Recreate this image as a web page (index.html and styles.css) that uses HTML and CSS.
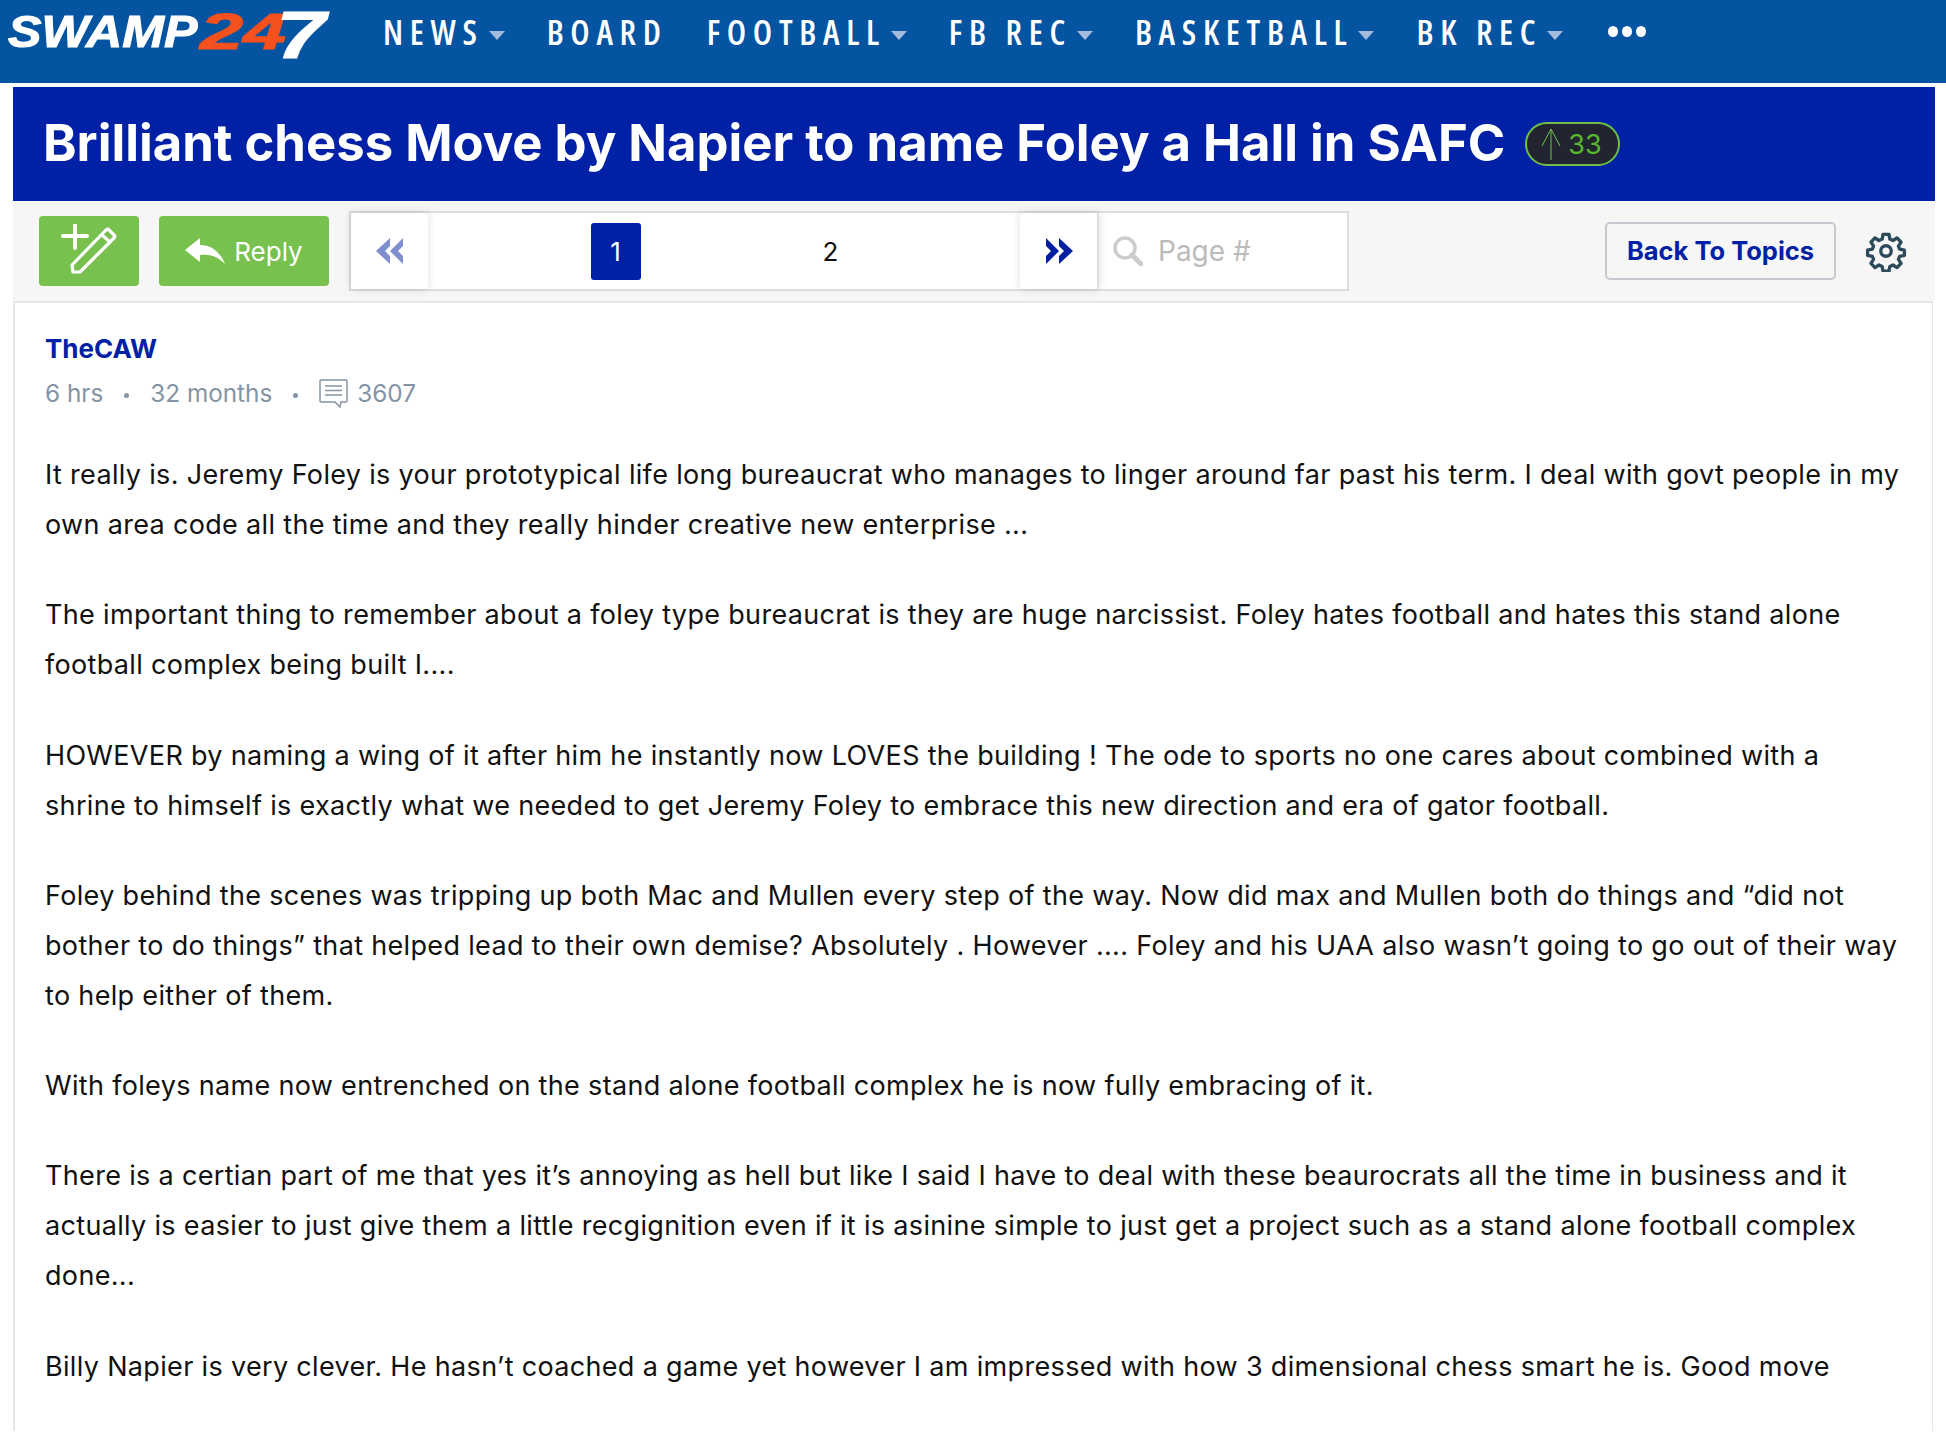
FILE: index.html
```html
<!DOCTYPE html>
<html lang="en">
<head>
    <meta charset="UTF-8">
    <meta name="viewport" content="width=device-width, initial-scale=1.0">
    <title>Brilliant chess Move by Napier to name Foley a Hall in SAFC</title>
    <link rel="stylesheet" href="styles.css">
</head>
<body>

    <!-- Top nav -->
    <header class="topnav">
        <a class="logo" href="#"><span class="logo-name">SWAMP</span><span class="logo-num">24</span><span class="logo-seven">7</span></a>
        <nav class="menu">
            <a class="menu-item caret" href="#">NEWS</a>
            <a class="menu-item" href="#">BOARD</a>
            <a class="menu-item caret" href="#">FOOTBALL</a>
            <a class="menu-item caret" href="#">FB REC</a>
            <a class="menu-item caret" href="#">BASKETBALL</a>
            <a class="menu-item caret" href="#">BK REC</a>
            <a class="menu-dots" href="#"><i></i><i></i><i></i></a>
        </nav>
    </header>

    <main class="wrap">
        <div class="title-bar">
            <h1>Brilliant chess Move by Napier to name Foley a Hall in SAFC</h1>
            <span class="votes">
                <svg width="20" height="34" viewBox="0 0 20 34"><path d="M10 33V2M1 19 10 2l9 17" fill="none" stroke="#6cc04a" stroke-width="1"/></svg>
                33
            </span>
        </div>

        <div class="toolbar">
            <a class="btn btn-new" href="#">
                <svg width="56" height="54" viewBox="0 0 56 54"><path d="M2 12h24M14 0v24" stroke="#fff" stroke-width="4" stroke-linecap="round" fill="none"/><path d="M11 41 45 6c1-1 2-1 3 0l5 5c1 1 1 2 0 3L19 48H12zM41 11l8 7" stroke="#fff" stroke-width="3.200" fill="none" stroke-linejoin="round"/></svg>
            </a>
            <a class="btn btn-reply" href="#">
                <svg width="40" height="26" viewBox="0 0 40 26"><path d="M0 12 15 0v7c13 0 21 9 25 19-7-7-14-10-25-9v7z" fill="#fff"/></svg>
                Reply
            </a>
            <div class="pager">
                <a class="page-arrow" href="#">
                    <svg class="faded" width="28" height="28" viewBox="0 0 28 28"><path d="M14 1 0 14l14 13v-8L9 14l5-5zM27 1 14 14l13 13v-8l-5-5 5-5z" fill="#00209f"/></svg>
                </a>
                <div class="page-nums">
                    <a class="page-num current" href="#">1</a>
                    <a class="page-num" href="#">2</a>
                </div>
                <a class="page-arrow next" href="#">
                    <svg width="28" height="28" viewBox="0 0 28 28"><path d="M1 1l13 13L1 27v-8l5-5-5-5zM14 1l14 13-14 13v-8l5-5-5-5z" fill="#00209f"/></svg>
                </a>
                <div class="page-search">
                    <svg width="30" height="30" viewBox="0 0 30 30"><circle cx="12" cy="12" r="10" fill="none" stroke="#ccc" stroke-width="3.500"/><path d="M19 19l9 9" stroke="#ccc" stroke-width="5" stroke-linecap="round"/></svg>
                    <span>Page #</span>
                </div>
            </div>
            <a class="back-link" href="#">Back To Topics</a>
            <a class="gear" href="#">
                <svg width="42" height="42" viewBox="0 0 24 24" fill="none" stroke="#2c4a5a" stroke-width="1.900" stroke-linejoin="round"><circle cx="12" cy="12" r="3"/><path d="M10.300 2.500h3.400l.5 2.700 1.800.8 2.300-1.500 2.300 2.400-1.500 2.300.7 1.700 2.700.6v3l-2.700.6-.7 1.700 1.500 2.300-2.300 2.400-2.300-1.500-1.800.8-.5 2.700h-3.400l-.5-2.700-1.800-.8-2.300 1.500-2.300-2.400 1.500-2.300-.7-1.700-2.700-.6v-3l2.700-.6.7-1.700-1.500-2.300 2.300-2.400 2.300 1.500 1.800-.8z"/></svg>
            </a>
        </div>

        <article class="post">
            <a class="post-author" href="#">TheCAW</a>
            <div class="post-meta">
                <span>6 hrs</span>
                <i class="dot"></i>
                <span>32 months</span>
                <i class="dot"></i>
                <svg width="29" height="29" viewBox="0 0 29 29" fill="none" stroke="#8494a4" stroke-width="1.500"><path d="M2 1h25a1 1 0 0 1 1 1v20a1 1 0 0 1-1 1h-5l-1 5-5-5H2a1 1 0 0 1-1-1V2a1 1 0 0 1 1-1z"/><path d="M6 7h17M6 11.500h17M6 16h17"/></svg>
                <span>3607</span>
            </div>
            <div class="post-body">
                <p>It really is. Jeremy Foley is your prototypical life long bureaucrat who manages to linger around far past his term. I deal with govt people in my own area code all the time and they really hinder creative new enterprise ...</p>
                <p>The important thing to remember about a foley type bureaucrat is they are huge narcissist. Foley hates football and hates this stand alone football complex being built I....</p>
                <p>HOWEVER by naming a wing of it after him he instantly now LOVES the building ! The ode to sports no one cares about combined with a shrine to himself is exactly what we needed to get Jeremy Foley to embrace this new direction and era of gator football.</p>
                <p>Foley behind the scenes was tripping up both Mac and Mullen every step of the way. Now did max and Mullen both do things and “did not bother to do things” that helped lead to their own demise? Absolutely . However .... Foley and his UAA also wasn’t going to go out of their way to help either of them.</p>
                <p>With foleys name now entrenched on the stand alone football complex he is now fully embracing of it.</p>
                <p>There is a certian part of me that yes it’s annoying as hell but like I said I have to deal with these beaurocrats all the time in business and it actually is easier to just give them a little recgignition even if it is asinine simple to just get a project such as a stand alone football complex done...</p>
                <p>Billy Napier is very clever. He hasn’t coached a game yet however I am impressed with how 3 dimensional chess smart he is. Good move</p>
            </div>
        </article>
    </main>

</body>
</html>
```

FILE: styles.css
```css
html, body {
    margin: 0;
    height: 1432px;
    overflow: hidden;
}
body {
    font-family: Inter, "Noto Sans", Arial, sans-serif;
    background: #fff;
    color: #111;
}
a {
    text-decoration: none;
    color: inherit;
}

/* top nav */
.topnav {
    display: flex;
    align-items: flex-start;
    height: 83px;
    background: #0454a2;
    margin-bottom: 4px;
}
.logo {
    display: flex;
    width: 383px;
    height: 70px;
    padding: 8px 0 0 8px;
    box-sizing: border-box;
    font-family: "Liberation Sans", Arial, sans-serif;
    font-weight: bold;
    font-style: italic;
    font-size: 44px;
    line-height: 48px;
    color: #fff;
    white-space: nowrap;
    -webkit-text-stroke: 1px currentColor;
    filter: blur(.5px);
}
.logo span {
    display: block;
    transform-origin: 0 0;
}
.logo-name {
    width: 192px;
    transform: scaleX(1.14);
}
.logo-num {
    width: 76px;
    color: #f4511e;
    font-size: 50px;
    transform: scaleX(1.55);
}
.logo-seven {
    font-size: 66px;
    line-height: 54px;
    transform: scaleX(1.35);
}
.menu {
    display: flex;
    align-items: center;
    gap: 39px;
    height: 63px;
    font-family: "Open Sans", "Liberation Sans", Arial, sans-serif;
    font-stretch: condensed;
}
.menu-item {
    color: #fff;
    font-size: 34px;
    font-weight: 600;
    letter-spacing: 6.700px;
    white-space: nowrap;
}
.caret::after {
    content: "";
    display: inline-block;
    margin: 0 3px 0 5px;
    vertical-align: middle;
    border: 8px solid transparent;
    border-top: 9px solid #a4bbdb;
    border-bottom: 0;
}
.menu-dots {
    display: flex;
    gap: 4px;
    margin-left: 3px;
}
.menu-dots i {
    width: 10px;
    height: 11px;
    border-radius: 50%;
    background: #fff;
}

/* title */
.wrap {
    margin-left: 13px;
    width: 1922px;
}
.title-bar {
    display: flex;
    align-items: center;
    height: 114px;
    padding-left: 30px;
    background: #0020a5;
    color: #fff;
}
.title-bar h1 {
    margin: 0 0 4px;
    font-size: 50.800px;
    font-weight: 700;
    white-space: nowrap;
}
.votes {
    display: flex;
    align-items: center;
    gap: 7px;
    height: 44px;
    box-sizing: border-box;
    margin-left: 20px;
    padding: 0 16px 0 14px;
    border: 2px solid #6cc04a;
    border-radius: 22px;
    background: #22242f;
    color: #58b92e;
    font-size: 27px;
}

/* toolbar */
.toolbar {
    display: flex;
    align-items: center;
    height: 100px;
    padding: 0 28px 0 26px;
    background: #f6f6f6;
}
.btn {
    display: flex;
    align-items: center;
    justify-content: center;
    height: 70px;
    border-radius: 4px;
    background: #78c14f;
    color: #fff;
    font-size: 26px;
}
.btn-new {
    width: 100px;
}
.btn-reply {
    width: 170px;
    gap: 9px;
    margin-left: 20px;
}
.pager {
    display: flex;
    width: 1000px;
    height: 80px;
    box-sizing: border-box;
    margin-left: 20px;
    border: 2px solid #ddd;
    background: #fff;
}
.page-arrow {
    display: flex;
    align-items: center;
    justify-content: center;
    width: 77px;
    flex: none;
    border-radius: 3px;
    box-shadow: 0 0 8px rgba(0, 0, 0, .15);
}
.page-arrow .faded {
    opacity: .5;
}
.page-arrow.next {
    border-right: 2px solid #ddd;
}
.page-nums {
    display: flex;
    flex: 1;
    justify-content: center;
    align-items: center;
    gap: 165px;
    padding-right: 2px;
}
.page-num {
    display: flex;
    align-items: center;
    justify-content: center;
    width: 50px;
    height: 57px;
    border-radius: 3px;
    font-size: 26px;
}
.page-num.current {
    background: #0020a5;
    color: #fff;
}
.page-search {
    display: flex;
    align-items: center;
    gap: 15px;
    width: 248px;
    flex: none;
    padding-left: 14px;
    box-sizing: border-box;
    color: #bbb;
    font-size: 28px;
}
.back-link {
    display: flex;
    align-items: center;
    justify-content: center;
    width: 231px;
    height: 58px;
    box-sizing: border-box;
    margin-left: auto;
    padding-bottom: 2px;
    border: 2px solid #c8c8d0;
    border-radius: 5px;
    color: #0020a5;
    font-size: 25.500px;
    font-weight: 700;
}
.gear {
    display: flex;
    margin-left: 29px;
}

/* post */
.post {
    width: 1920px;
    min-height: 1130px;
    box-sizing: border-box;
    padding: 28px 30px 0;
    background: #fff;
    border: 2px solid #e6e6e6;
    border-bottom: 0;
    border-right-width: 1px;
}
.post-author {
    display: block;
    color: #0020a5;
    font-size: 26px;
    font-weight: 700;
    line-height: 36px;
}
.post-meta {
    display: flex;
    align-items: center;
    gap: 9px;
    margin-top: 4px;
    height: 44px;
    color: #8494a4;
    font-size: 24.300px;
}
.dot {
    width: 5px;
    height: 5px;
    margin: 4px 12px 0 12px;
    border-radius: 50%;
    background: #8494a4;
}
.post-body {
    margin-top: 35px;
    font-size: 27px;
    letter-spacing: .33px;
    line-height: 50px;
}
.post-body p {
    margin: 0 0 40.300px;
}
```
